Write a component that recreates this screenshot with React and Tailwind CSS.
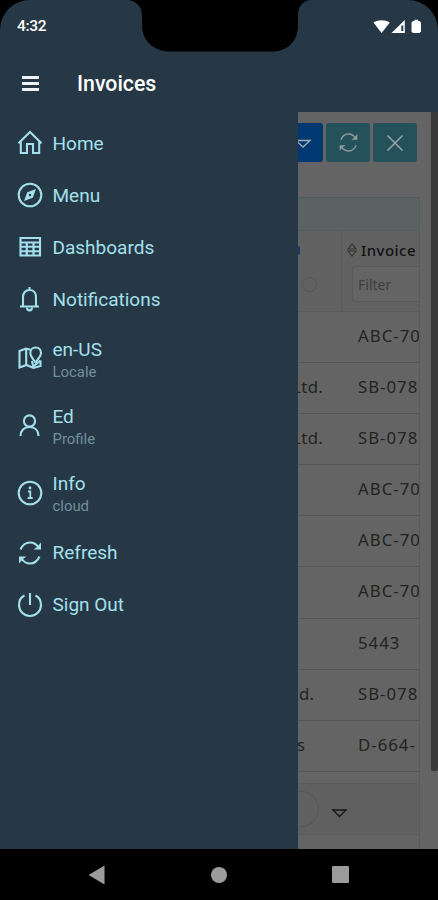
/* ------------------ data ------------------ */
const menuItems = [
  { icon: "home", label: "Home" },
  { icon: "compass", label: "Menu" },
  { icon: "table", label: "Dashboards" },
  { icon: "bell", label: "Notifications" },
  { icon: "map", label: "en-US", note: "Locale" },
  { icon: "user", label: "Ed", note: "Profile" },
  { icon: "info", label: "Info", note: "cloud" },
  { icon: "refresh", label: "Refresh" },
  { icon: "power", label: "Sign Out" },
];

const invoices = [
  { vendor: "", number: "ABC-70" },
  { vendor: "Ltd.", number: "SB-078" },
  { vendor: "Ltd.", number: "SB-078" },
  { vendor: "", number: "ABC-70" },
  { vendor: "", number: "ABC-70" },
  { vendor: "", number: "ABC-70" },
  { vendor: "", number: "5443" },
  { vendor: "d.", number: "SB-078" },
  { vendor: "s", number: "D-664-" },
];

/* ------------------ page ------------------ */
export default function App() {
  return (
    <div className="relative flex h-[900px] w-[438px] flex-col overflow-hidden bg-black font-['Roboto',sans-serif]">
      <StatusBar />
      <header className="flex h-[58px] items-center bg-[#263746] pl-[22px] text-white">
        <div className="flex w-[17px] flex-col gap-[3px]">
          <span className="h-[3px] bg-[#eef3f6]" />
          <span className="h-[3px] bg-[#eef3f6]" />
          <span className="h-[3px] bg-[#eef3f6]" />
        </div>
        <h1 className="ml-[38px] pt-[2px] text-[21.3px] font-medium leading-6">Invoices</h1>
      </header>
      <div className="flex h-[737px]">
        <Drawer />
        <InvoicePage />
        <div className="h-full w-[7px] bg-[#646464]">
          <div className="h-[659px] rounded-b-xs bg-[#393939]" />
        </div>
      </div>
      <NavBar />
    </div>
  );
}

/* ------------------ Components ------------------ */

function StatusBar() {
  return (
    <div className="relative flex h-[54px] shrink-0 items-center justify-between rounded-t-[30px] bg-[#263746] pl-[17px] pr-[16px] text-[15.5px] font-medium text-white">
      {/* camera notch */}
      <svg className="absolute left-[128px] top-0" width="182" height="52" viewBox="0 0 182 52" fill="#000">
        <path d="M0 0C9 1 14 7 14 16V25C14 41 26 51.500 42 51.500H144C160 51.500 170 41 170 25V16C170 7 174 1 182 0Z" />
      </svg>
      <span className="tracking-[-0.3px]">4:32</span>
      <svg width="49" height="16" viewBox="0 0 49 16" fill="#fff">
        <path d="M.5 3.500C5 .4 12 .4 16.800 3.500L8.600 14Z" />
        <path d="M31.800 1V14H18.500Z" />
        <path d="M28.300 6.500H30.300V12H28.300Z" fill="#263746" />
        <path d="M38.500 3.500L40 2H41.500V.8H45V2H46.500L48 3.500V12.500L46.500 14H40L38.500 12.500Z" />
      </svg>
    </div>
  );
}

function Drawer() {
  return (
    <nav className="h-full w-[298px] shrink-0 bg-[#263746] pt-[5px] text-[#a3e0eb]">
      {menuItems.map((item) => (
        <div
          key={item.label}
          className={
            item.note
              ? "flex h-[67.33px] items-center pl-[17px]"
              : "flex h-[52px] items-center pl-[17px]"
          }
        >
          <MenuIcon name={item.icon} />
          <div className={item.note ? "ml-[9.5px] pt-[3px]" : "ml-[9.5px] pt-[1px]"}>
            <p className="text-[19px] leading-6">{item.label}</p>
            {item.note && (
              <p className="text-[14.9px] leading-[21px] text-[#71909b]">{item.note}</p>
            )}
          </div>
        </div>
      ))}
    </nav>
  );
}

function InvoicePage() {
  return (
    <main className="flex h-full w-[133px] shrink-0 flex-col overflow-hidden bg-[#646464] pr-[11px] font-['Noto_Sans',sans-serif] text-[#232323]">
      {/* toolbar */}
      <div className="mt-[11px] flex h-[39px] shrink-0 gap-[3px]">
        <div className="flex w-[25px] items-center rounded-r-[3px] bg-[#003871]">
          <svg width="14" height="12" viewBox="0 0 14 12" fill="none" stroke="#a5adb4" strokeWidth="1.400">
            <path d="M-2 3.500H12L5 10Z" />
          </svg>
        </div>
        <div className="flex w-[44px] items-center justify-center rounded-[3px] bg-[#25515b] text-[#8d9a9d]">
          <svg width="21" height="21" viewBox="0 0 26 26" fill="none" stroke="currentColor" strokeWidth="1.700">
            <Refresh />
          </svg>
        </div>
        <div className="flex w-[44px] items-center justify-center rounded-[3px] bg-[#25515b]">
          <svg width="18" height="18" viewBox="0 0 18 18" stroke="#9ba5a8" strokeWidth="1.500">
            <path d="M1.500 1.500L16.500 16.500M16.500 1.500L1.500 16.500" />
          </svg>
        </div>
      </div>

      {/* grid */}
      <div className="mt-[35px] flex flex-1 flex-col overflow-hidden border-r border-[#5b5b5b]">
        <div className="h-[34px] shrink-0 border-y border-t-[#4c5b5e] border-b-[#515d5f] bg-[#5a6262]" />
        <div className="flex h-[81px] shrink-0 border-b border-[#5a5a5a] bg-[#616161]">
          <div className="flex w-[44px] shrink-0 flex-col border-r border-[#5a5a5a]">
            <span className="mt-[15px] h-[9px] w-[2px] rounded-r-full bg-[#173d62]" />
            <span className="ml-[4px] mt-[22px] size-[15px] rounded-full border border-[#555]" />
          </div>
          <div className="min-w-0 flex-1 pt-[7px]">
            <div className="ml-[5px] flex items-center gap-[4px]">
              <svg className="shrink-0" width="10" height="14" viewBox="0 0 10 14" fill="none" stroke="#333" strokeWidth="1.100">
                <path d="M1 6L5 1L9 6ZM1 8L5 13L9 8Z" />
              </svg>
              <span className="whitespace-nowrap text-[15px] font-medium leading-6 tracking-[0.45px] text-[#111]">Invoice</span>
            </div>
            <div className="ml-[10px] mt-[4px] h-[36px] rounded-l-[3px] border border-r-0 border-[#595959] bg-[#646464] pl-[5px] pt-px text-[14px] leading-[34px] text-[#3e3e3e]">
              Filter
            </div>
          </div>
        </div>
        {invoices.map((row, i) => (
          <div
            key={i}
            className="flex h-[51.1px] shrink-0 items-center whitespace-nowrap border-b border-[#565656] pb-[3px] text-[16.8px] tracking-[1px]"
          >
            <span className="flex w-[60px] shrink-0">
              <Vendor name={row.vendor} />
            </span>
            <span>{row.number}</span>
          </div>
        ))}
        <div className="h-[12px] shrink-0 rounded-br-[4px] border-b border-[#5b5b5b]" />
        {/* pager */}
        <div className="flex h-[51px] shrink-0 items-center border-b border-[#5b5b5b] bg-[#606060]">
          <div className="h-[36px] w-[21px] rounded-r-full border border-l-0 border-[#575757]" />
          <svg className="ml-[12px] mt-[11px]" width="18" height="12" viewBox="0 0 18 12" fill="none" stroke="#151515" strokeWidth="1.400">
            <path d="M2 2H15L8.500 8.500Z" />
          </svg>
        </div>
      </div>
    </main>
  );
}

// the open drawer covers the start of the vendor names
function Vendor({ name }) {
  if (name === "Ltd.") {
    return <span className="-ml-[6px] tracking-[0.4px]">{name}</span>;
  }
  return <span className={name === "s" ? "-ml-[1px]" : "ml-[1px] tracking-[0.3px]"}>{name}</span>;
}

function NavBar() {
  return (
    <footer className="flex h-[51px] shrink-0 items-center justify-between bg-black pl-[88px] pr-[89px]">
      <svg width="17" height="20" viewBox="0 0 17 20" fill="#9b9b9b">
        <path d="M.5 10L16.500 .5V19.500Z" />
      </svg>
      <span className="ml-[15px] size-[16px] rounded-full bg-[#9b9b9b]" />
      <span className="ml-[14px] size-[17px] rounded-[1px] bg-[#9b9b9b]" />
    </footer>
  );
}

function Refresh() {
  return (
    <>
      <path d="M3.500 9.500C5.500 5 9 2.500 13 2.500C16.500 2.500 19.500 4.300 21.500 7.500" />
      <path d="M24 2.500V9.500H16.500L20 7Z" fill="currentColor" stroke="none" />
      <path d="M22.500 16.500C20.500 21 17 23.500 13 23.500C9.500 23.500 6.500 21.700 4.500 18.500" />
      <path d="M2 23.500V16.500H9.500L6 19Z" fill="currentColor" stroke="none" />
    </>
  );
}

function MenuIcon({ name }) {
  return (
    <svg className="shrink-0" width="26" height="26" viewBox="0 0 26 26" fill="none" stroke="currentColor" strokeWidth="2.100">
      {name === "home" && (
        <path d="M1.500 13.200L13 2L24.500 13.200M3.800 11.500V23H10V14H16V23H22.200V11.500" />
      )}
      {name === "compass" && (
        <>
          <circle cx="13" cy="13" r="11.300" />
          <path d="M19 7L15.800 15.800L7 19L10.200 10.200Z" fill="currentColor" stroke="none" />
          <circle cx="13" cy="13" r="1.200" fill="#263746" stroke="none" />
        </>
      )}
      {name === "table" && (
        <>
          <path d="M3.500 4H23V21.500H3.500Z" />
          <path d="M3 8.500H23M3 12.800H23M3 17.200H23" strokeWidth="1.900" />
          <path d="M9.800 8.500V21.500M16.500 8.500V21.500" strokeWidth="2.200" />
        </>
      )}
      {name === "bell" && (
        <>
          <path d="M6 20V11C6 7 8.500 4 12.500 4S19 7 19 11V20M3 20.500H22M12.500 4V1" />
          <path d="M10 21.500C10 25.300 15 25.300 15 21.500" />
        </>
      )}
      {name === "map" && (
        <>
          <path d="M13.500 3.800L9 2.500L2.500 5V21.500L9.500 19L16.500 22L23.500 20V14.500M9.200 3V19" />
          <path d="M18.500 16.500C15.500 12.500 13.300 10 13.300 7C13.300 3.800 15.500 1.500 18.700 1.500S24 3.800 24 7C24 10 21.500 12.500 18.500 16.500Z" />
          <path d="M15 15L16.500 21.500M23.500 14.500L17 20" />
        </>
      )}
      {name === "user" && (
        <>
          <circle cx="12.500" cy="8" r="5.600" />
          <path d="M3.500 23C3.500 17.500 7 14 12.500 14S21.500 17.500 21.500 23" />
        </>
      )}
      {name === "info" && (
        <>
          <circle cx="13" cy="13" r="11.300" />
          <path d="M11 11.500H13.300V18M10.700 18H15.700" strokeWidth="1.800" />
          <circle cx="13" cy="8" r="1.400" fill="currentColor" stroke="none" />
        </>
      )}
      {name === "refresh" && <Refresh />}
      {name === "power" && (
        <path d="M13 1V13M7.500 3.500C4 5.200 2 8.700 2 13C2 19 7 24 13 24S24 19 24 13C24 8.700 22 5.200 18.500 3.500" />
      )}
    </svg>
  );
}
